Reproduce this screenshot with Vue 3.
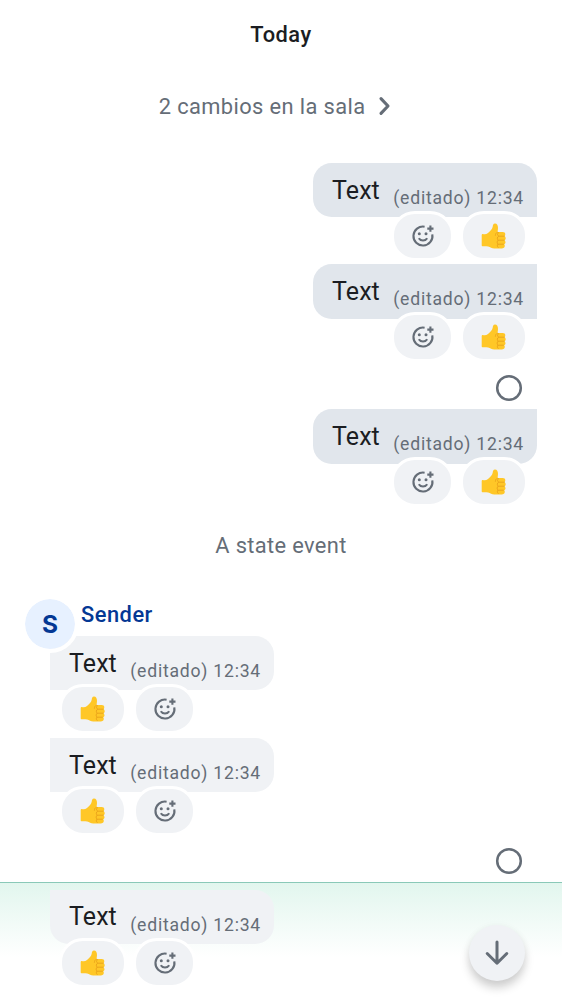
<script setup>
const timeline = [
  { kind: 'day', text: 'Today' },
  { kind: 'changes', text: '2 cambios en la sala' },
  { kind: 'message', mine: true, pos: 'first' },
  { kind: 'message', mine: true, pos: 'middle' },
  { kind: 'receipt' },
  { kind: 'message', mine: true, pos: 'last' },
  { kind: 'state', text: 'A state event' },
  { kind: 'sender', text: 'Sender' },
  { kind: 'message', mine: false, pos: 'first' },
  { kind: 'message', mine: false, pos: 'middle' },
  { kind: 'receipt', tall: true },
  { kind: 'message', mine: false, pos: 'last', focused: true },
]
</script>

<template>
  <main class="screen">
    <template v-for="(item, i) in timeline" :key="i">
      <h1 v-if="item.kind === 'day'" class="day">{{ item.text }}</h1>

      <div v-else-if="item.kind === 'changes'" class="changes">
        <span>{{ item.text }}</span>
        <svg class="chevron" viewBox="0 0 14 20">
          <path d="M3 2.6 10 10l-7 7.4" />
        </svg>
      </div>

      <div v-else-if="item.kind === 'receipt'" class="receipt" :class="{ tall: item.tall }">
        <svg viewBox="0 0 28 28"><circle cx="14" cy="14" r="11.8" /></svg>
      </div>

      <p v-else-if="item.kind === 'state'" class="state">{{ item.text }}</p>

      <div v-else-if="item.kind === 'sender'" class="sender">
        <span class="avatar">S</span>
        <span class="name">{{ item.text }}</span>
      </div>

      <section
        v-else
        class="message"
        :class="[item.mine ? 'mine' : 'theirs', item.pos, { focused: item.focused }]"
      >
        <div class="bubble">
          <span class="body">Text</span>
          <span class="meta">(editado) 12:34</span>
        </div>
        <div class="reactions">
          <span class="pill thumb">
            <svg viewBox="0 0 28 28">
              <g transform="translate(.5 .6)">
                <path class="hand" d="M1.2 12.400c0-.7.5-1 1.2-.9 2 .4 3.700.1 5.100-1.100 2.300-1.900 4.300-3.800 4.700-6.200.2-1.600.6-3.200 2.300-3.200 2 0 3 1.900 3 4.500 0 1.600-.3 2.800-.6 4h5.300c1.700 0 2.600.9 2.600 2.200 0 .9-.4 1.500-.9 1.900.9.400 1.300 1.200 1.300 2.100 0 1-.5 1.700-1.200 2.100.7.400 1 1.100 1 1.900 0 1-.6 1.700-1.300 2 .4.400.6.900.6 1.500 0 1.700-1.300 2.700-3.200 2.700h-5.500c-2.500 0-4.700-.4-6.400-1.500-1.200-.8-2.700-1-4.500-.8l-2.300.1c-.8 0-1.200-.4-1.200-1.100Z" />
                <path class="crease" d="M17 9.500c-1.300.5-2 1.600-2.100 3.200M18.200 13.600h5.600M17.700 17.600h6M17.500 21.600h5.400M18 10c-1.400.8-1.300 2.900.2 3.600-1.700.6-1.800 3.200-.5 4-1.300.6-1.400 3.100-.2 4-1 .8-.9 2.300.2 3.300" />
              </g>
            </svg>
          </span>
          <span class="pill add">
            <svg viewBox="0 0 24 24">
              <path class="outline" d="M13.600 2.700A9.500 9.500 0 1 0 21.300 10.400" />
              <path class="outline" d="M7.800 14.300c1.800 3 6.600 3 8.400 0" />
              <circle cx="8.3" cy="9.8" r="1.5" />
              <circle cx="15" cy="9.8" r="1.5" />
              <path class="plus" d="M19.400 1.500v6.200M16.300 4.600h6.200" />
            </svg>
          </span>
        </div>
      </section>
    </template>

    <button class="jump" aria-label="Jump to bottom">
      <svg viewBox="0 0 24 26">
        <path d="M12 2v21M2.200 13.500 12 23.200l9.800-9.700" />
      </svg>
    </button>
  </main>
</template>

<style>
body {
  background: #fff;
  overflow: hidden;
}
</style>

<style scoped>
.screen {
  position: relative;
  display: flex;
  flex-direction: column;
  width: 562px;
  height: 1000px;
  overflow: hidden;
  background: #fff;
  color: #1b1d22;
  font-family: Roboto, "Liberation Sans", sans-serif;
}

.day {
  flex: none;
  height: 69px;
  margin: 0;
  font-size: 21.85px;
  line-height: 69px;
  font-weight: 500;
  letter-spacing: 0.5px;
  text-align: center;
}

.changes {
  flex: none;
  display: flex;
  align-items: center;
  height: 74px;
  margin: 0 0 19.8px;
  padding-left: 158.7px;
  color: #656d77;
  font-size: 21.85px;
  letter-spacing: 0.39px;
}

.chevron {
  width: 14px;
  height: 20px;
  margin-left: 12.5px;
  fill: none;
  stroke: #656d77;
  stroke-width: 3.1;
  stroke-linecap: round;
  stroke-linejoin: round;
}

.message {
  position: relative;
  flex: none;
  height: 101.5px;
  display: flex;
  flex-direction: column;
}

.mine {
  align-items: flex-end;
  padding-right: 25px;
}

.theirs {
  align-items: flex-start;
  padding-left: 50px;
}

.bubble {
  flex: none;
  box-sizing: border-box;
  display: flex;
  align-items: flex-start;
  width: 224px;
  height: 54.3px;
  padding: 0 13px 0 19px;
  white-space: nowrap;
}

.mine .bubble {
  background: #e1e6ec;
  border-radius: 18.7px 0 0 18.7px;
}

.mine.first .bubble {
  border-top-right-radius: 18.7px;
}

.mine.last .bubble {
  border-bottom-right-radius: 18.7px;
}

.theirs .bubble {
  background: #f0f2f5;
  border-radius: 0 18.7px 18.7px 0;
}

.theirs.last .bubble {
  border-bottom-left-radius: 18.7px;
}

.body {
  font-size: 24.98px;
  line-height: 56px;
  letter-spacing: 0.1px;
}

.focused .body {
  line-height: 54px;
}

.meta {
  margin-left: auto;
  padding-top: 8px;
  color: #656d77;
  font-size: 17.6px;
  line-height: 54.6px;
  letter-spacing: 0.77px;
}

.reactions {
  flex: none;
  display: flex;
  gap: 6px;
  margin-top: -6.3px;
  padding: 0 9px;
}

.mine .reactions {
  flex-direction: row-reverse;
}

.pill {
  display: flex;
  align-items: center;
  justify-content: center;
  box-sizing: border-box;
  height: 50px;
  border: 3px solid #fff;
  border-radius: 24px;
  background: #f0f2f5;
}

.thumb {
  width: 68px;
}

.thumb svg {
  width: 28px;
  height: 28px;
}

.hand {
  fill: #ffc727;
}

.crease {
  fill: none;
  stroke: #e9a21b;
  stroke-width: 0.9;
  stroke-linecap: round;
}

.add {
  width: 63px;
}

.add svg {
  width: 24px;
  height: 24px;
  fill: #656d77;
}

.add .outline,
.add .plus {
  fill: none;
  stroke: #656d77;
  stroke-width: 2.1;
  stroke-linecap: butt;
}

.receipt {
  flex: none;
  display: flex;
  align-items: flex-start;
  justify-content: flex-end;
  box-sizing: border-box;
  height: 43.6px;
  padding: 7.9px 39px 0 0;
}

.receipt.tall {
  height: 42.5px;
  padding-top: 7.7px;
}

.receipt svg {
  width: 28px;
  height: 28px;
  fill: none;
  stroke: #656d77;
  stroke-width: 2.5;
}

.state {
  flex: none;
  height: 70.2px;
  margin: 0;
  color: #656d77;
  font-size: 21.85px;
  line-height: 70px;
  letter-spacing: 0.36px;
  text-align: center;
}

.sender {
  position: relative;
  z-index: 1;
  flex: none;
  display: flex;
  align-items: flex-start;
  height: 55.1px;
  box-sizing: border-box;
  padding: 14px 0 0 21px;
}

.avatar {
  flex: none;
  width: 50px;
  height: 50px;
  border: 4px solid #fff;
  border-radius: 50%;
  background: #e7f1ff;
  background-clip: padding-box;
  color: #043894;
  font-family: Inter, Roboto, sans-serif;
  font-size: 24.5px;
  line-height: 50px;
  font-weight: 700;
  text-align: center;
}

.name {
  margin: 6.5px 0 0 2px;
  color: #043894;
  font-size: 21.85px;
  line-height: 26px;
  font-weight: 500;
  letter-spacing: 0.5px;
}

.focused {
  height: 118px;
  padding-top: 7.2px;
  background: linear-gradient(#e2f6ee 0, #fff 74px);
  border-top: 1.5px solid #8ac9b8;
}

.jump {
  position: absolute;
  right: 37.5px;
  bottom: 19px;
  display: flex;
  align-items: center;
  justify-content: center;
  width: 56px;
  height: 56px;
  padding: 0;
  border: 0;
  border-radius: 50%;
  background: #f0f2f5;
  box-shadow: 0 7px 10px rgba(0, 0, 0, 0.18), 0 1px 8px rgba(0, 0, 0, 0.04);
}

.jump svg {
  width: 24px;
  height: 26px;
  fill: none;
  stroke: #656d77;
  stroke-width: 3;
  stroke-linecap: round;
  stroke-linejoin: round;
}
</style>
